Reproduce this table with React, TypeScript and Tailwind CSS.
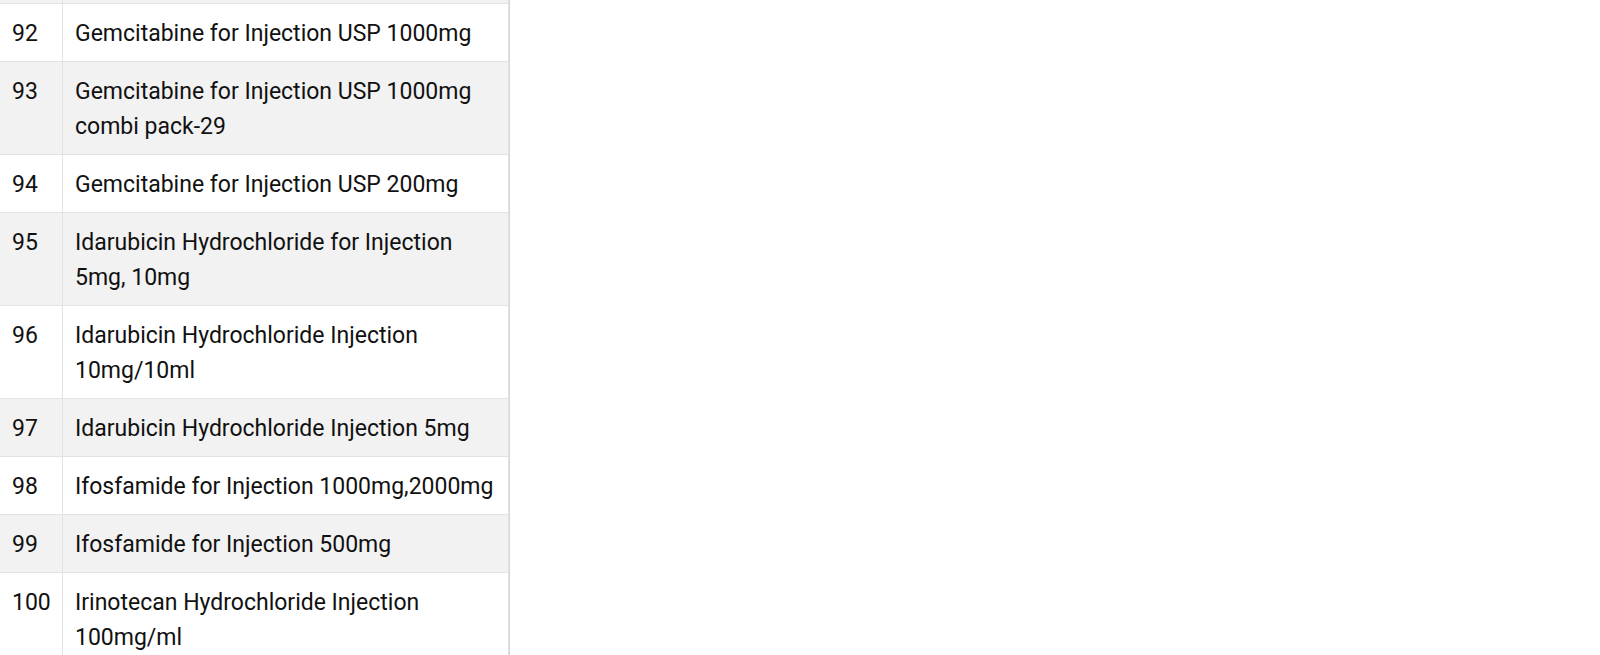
import React from "react";

const rows: [string, string][] = [
  ["92", "Gemcitabine for Injection USP 1000mg"],
  ["93", "Gemcitabine for Injection USP 1000mg combi pack-29"],
  ["94", "Gemcitabine for Injection USP 200mg"],
  ["95", "Idarubicin Hydrochloride for Injection 5mg, 10mg"],
  ["96", "Idarubicin Hydrochloride Injection 10mg/10ml"],
  ["97", "Idarubicin Hydrochloride Injection 5mg"],
  ["98", "Ifosfamide for Injection 1000mg,2000mg"],
  ["99", "Ifosfamide for Injection 500mg"],
  ["100", "Irinotecan Hydrochloride Injection 100mg/ml"],
];

export default function App() {
  return (
    <div
      className="w-[1600px] h-[655px] overflow-hidden bg-white"
      style={{ fontFamily: "Roboto, 'Liberation Sans', sans-serif" }}
    >
      <div className="w-[510px] border-r border-[#d6d6d6]">
        <div className="flex h-[3px] bg-[#f2f2f2]">
          <div className="w-[63px] border-r border-[#e3e3e3]" />
          <div className="flex-1 border-r border-[#e3e3e3]" />
        </div>
        {rows.map(([n, name], i) => (
          <div
            key={n}
            className={`flex border-t border-[#e3e3e3] text-[23px] leading-[35px] text-[#111] ${
              i % 2 === 1 ? "bg-[#f2f2f2]" : "bg-white"
            }`}
          >
            <div className="w-[63px] shrink-0 border-r border-[#e3e3e3] pl-[12px] pt-[12px] pb-[10px]">
              {n}
            </div>
            <div className="flex-1 border-r border-[#e3e3e3] pl-[12px] pr-[12px] pt-[12px] pb-[10px]">
              {name}
            </div>
          </div>
        ))}
      </div>
    </div>
  );
}
